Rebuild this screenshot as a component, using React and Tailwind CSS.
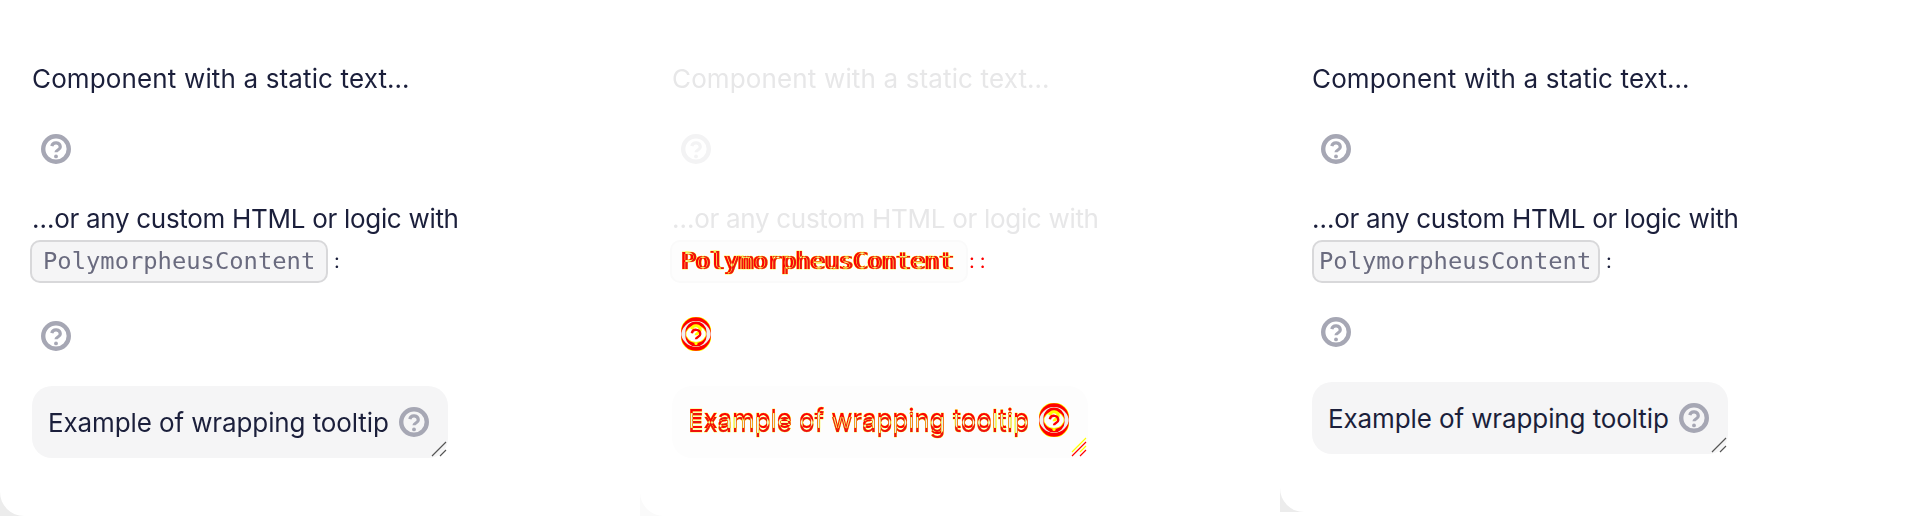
const SANS = 'font-[Inter,"Noto_Sans",sans-serif]';
const MONO = 'font-["DejaVu_Sans_Mono","Liberation_Mono",monospace]';

const QUESTION = 'M10.8 12.2a4.3 4.3 0 0 1 8.5 .8c0 2.9-4.3 3-4.3 5.2';

const HelpIcon = ({ className = '' }) => (
  <svg viewBox="0 0 30 30" fill="none" className={`w-[30px] h-[30px] shrink-0 ${className}`}>
    <circle cx="15" cy="15" r="12.8" stroke="currentColor" strokeWidth="4.4" />
    <path d={QUESTION} stroke="currentColor" strokeWidth="3.2" />
    <circle cx="15" cy="22.4" r="1.9" fill="currentColor" />
  </svg>
);

// two help icons 4px apart, red where only one of them covers the pixel
const DiffIcon = ({ id, className = '' }) => (
  <svg viewBox="0 0 30 34" fill="none" className={`w-[30px] h-[34px] shrink-0 ${className}`}>
    <mask id={id}>
      <circle cx="15" cy="15" r="12.8" stroke="#fff" strokeWidth="4.4" />
    </mask>
    <circle cx="15" cy="15" r="12.8" stroke="#ffff00" strokeWidth="5.4" />
    <circle cx="15" cy="19" r="12.8" stroke="#ffff00" strokeWidth="5.4" />
    <circle cx="15" cy="15" r="12.8" stroke="#ff0000" strokeWidth="4" />
    <circle cx="15" cy="19" r="12.8" stroke="#ff0000" strokeWidth="4" />
    <circle cx="15" cy="19" r="12.8" stroke="#f0f0f0" strokeWidth="4.4" mask={`url(#${id})`} />
    <path d={QUESTION} stroke="#ffff00" strokeWidth="3" />
    <path d={QUESTION} stroke="#ff0000" strokeWidth="2.4" transform="translate(0 4)" />
    <circle cx="15" cy="26.4" r="1.6" fill="#ffff00" />
  </svg>
);

const Grip = ({ className = '' }) => (
  <svg viewBox="0 0 16 16" fill="none" className={`w-4 h-4 ${className}`}>
    <path d="M1 15 15 1M9 15l6-6" stroke="currentColor" strokeWidth="1.2" />
  </svg>
);

const Panel = ({ right }) => (
  <div className={`w-[640px] ${right ? 'h-[512px]' : 'h-[516px]'} bg-[#ececec]`}>
    <div className={`h-full bg-white rounded-bl-[24px] pt-[57px] pl-[32px] ${SANS} text-[#1b1f3b] text-[26px] leading-[43px]`}>
      <p className="tracking-[0.14px]">Component with a static text…</p>
      <div className="mt-[34px] ml-[9px]"><HelpIcon className="text-[#a6a7b4]" /></div>
      <p className="mt-[33px] tracking-[-0.3px]">…or any custom HTML or logic with</p>
      <p className="flex items-center">
        <code className={`${MONO} ${right ? 'w-[288px] h-[43px] pl-[5px]' : '-ml-[2px] w-[298px] h-[43px] pl-[11px]'} flex items-center text-[23.8px] text-[#6a6b7f] bg-[#f5f5f6] border-2 border-[#d8d8da] rounded-[10px]`}>
          PolymorpheusContent
        </code>
        <span className="ml-[6px] text-[20px]">:</span>
      </p>
      <div className={`${right ? 'mt-[34px]' : 'mt-[38px]'} ml-[9px]`}><HelpIcon className="text-[#a6a7b4]" /></div>
      <div className="relative mt-[35px] flex items-center gap-[10px] w-[416px] h-[72px] pl-[16px] bg-[#f5f5f6] rounded-[20px]">
        <span className="tracking-[-0.11px]">Example of wrapping tooltip</span>
        <HelpIcon className="text-[#a6a7b4]" />
        <Grip className="absolute right-[1px] bottom-[1px] text-[#555]" />
      </div>
    </div>
  </div>
);

// text rendered twice with an offset: red where only one copy is, pale where both are
const Doubled = ({ shift, children }) => (
  <span className="relative inline-block text-[#eeeeee]">
    <span>{children}</span>
    <span className="absolute left-0 top-0 text-[#00ffff] mix-blend-difference">{children}</span>
    <span className={`absolute ${shift} text-[#00ffff] mix-blend-difference`}>{children}</span>
    <span className="absolute left-0 top-0 text-transparent mix-blend-multiply [-webkit-text-stroke:0.5px_#ffff00]">{children}</span>
    <span className={`absolute ${shift} text-transparent mix-blend-multiply [-webkit-text-stroke:0.5px_#ffff00]`}>{children}</span>
  </span>
);

const DiffPanel = () => (
  <div className="w-[640px] h-[516px] bg-[#fafafa]">
    <div className={`h-full bg-white rounded-bl-[24px] pt-[57px] pl-[32px] ${SANS} text-[#e7e7e8] text-[26px] leading-[43px]`}>
      <p className="tracking-[0.14px]">Component with a static text…</p>
      <div className="mt-[34px] ml-[9px]"><HelpIcon className="text-[#f3f3f4]" /></div>
      <p className="mt-[33px] tracking-[-0.3px]">…or any custom HTML or logic with</p>
      <p className="flex items-center">
        <code className={`${MONO} -ml-[2px] w-[298px] h-[43px] pl-[11px] flex items-center text-[23.8px] bg-[#fdfdfd] border-2 border-[#fafafa] rounded-[10px]`}>
          <Doubled shift="-left-[3px] top-0">PolymorpheusContent</Doubled>
        </code>
        <span className="ml-[1px] text-[20px] flex gap-[5px] text-[#ff0000]"><span>:</span><span>:</span></span>
      </p>
      <div className="mt-[34px] ml-[9px]"><DiffIcon id="diff-help-a" /></div>
      <div className="relative mt-[35px] flex items-center gap-[10px] w-[416px] h-[72px] pl-[16px] bg-[#fdfdfd] rounded-[20px]">
        <span className="tracking-[-0.11px]"><Doubled shift="left-0 -top-[4px]">Example of wrapping tooltip</Doubled></span>
        <DiffIcon id="diff-help-b" className="-mt-[4px]" />
        <Grip className="absolute right-[1px] bottom-[5px] text-[#ffff00]" />
        <Grip className="absolute right-[1px] bottom-[1px] text-[#ff0000]" />
      </div>
    </div>
  </div>
);

export default function App() {
  return (
    <div className="flex w-[1920px] h-[516px] overflow-hidden bg-white">
      <Panel />
      <DiffPanel />
      <Panel right />
    </div>
  );
}
